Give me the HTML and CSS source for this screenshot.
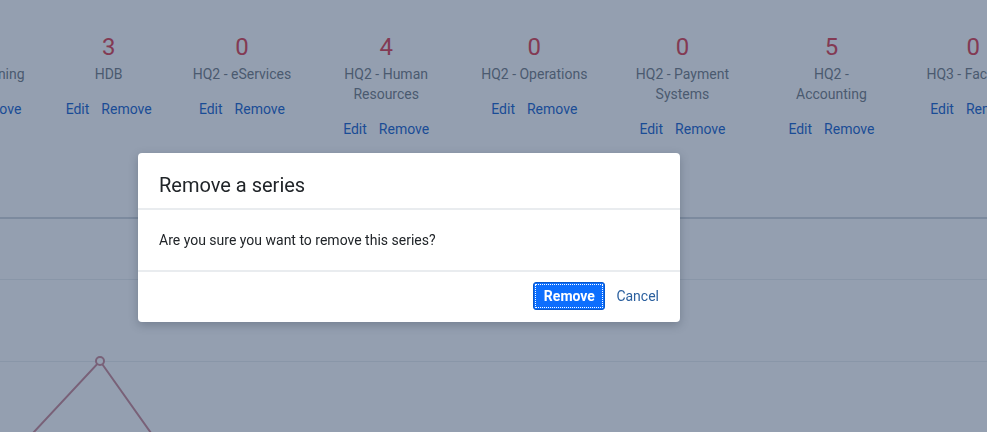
FILE: index.html
```html
<!DOCTYPE html>
<html>
<head lang="en">
    <meta charset="UTF-8">
    <title>Series</title>
    <link rel="stylesheet" href="styles.css">
</head>
<body>
<div class="page">
    <div class="series-list">
        <div class="series">
            <div class="count">2</div>
            <div class="name">HQ1 - Planning</div>
            <div class="actions"><a href="#">Edit</a><a href="#">Remove</a></div>
        </div>
        <div class="series">
            <div class="count">3</div>
            <div class="name">HDB</div>
            <div class="actions"><a href="#">Edit</a><a href="#">Remove</a></div>
        </div>
        <div class="series">
            <div class="count">0</div>
            <div class="name">HQ2 - eServices</div>
            <div class="actions"><a href="#">Edit</a><a href="#">Remove</a></div>
        </div>
        <div class="series">
            <div class="count">4</div>
            <div class="name">HQ2 - Human Resources</div>
            <div class="actions"><a href="#">Edit</a><a href="#">Remove</a></div>
        </div>
        <div class="series">
            <div class="count">0</div>
            <div class="name">HQ2 - Operations</div>
            <div class="actions"><a href="#">Edit</a><a href="#">Remove</a></div>
        </div>
        <div class="series">
            <div class="count">0</div>
            <div class="name">HQ2 - Payment Systems</div>
            <div class="actions"><a href="#">Edit</a><a href="#">Remove</a></div>
        </div>
        <div class="series">
            <div class="count">5</div>
            <div class="name">HQ2 - Accounting</div>
            <div class="actions"><a href="#">Edit</a><a href="#">Remove</a></div>
        </div>
        <div class="series">
            <div class="count">0</div>
            <div class="name">HQ3 - Facilities</div>
            <div class="actions"><a href="#">Edit</a><a href="#">Remove</a></div>
        </div>
    </div>

    <svg class="chart" width="987" height="215" viewBox="0 0 987 215">
        <line x1="0" y1="1" x2="987" y2="1" class="axis"/>
        <line x1="0" y1="62.5" x2="987" y2="62.5" class="grid"/>
        <line x1="0" y1="144.5" x2="987" y2="144.5" class="grid"/>
        <polyline points="33,216 100,144 151,216" class="trend"/>
        <circle cx="100" cy="144" r="4" class="dot"/>
    </svg>
</div>

<div class="backdrop"></div>

<div class="modal-layer">
    <div class="modal">
        <div class="modal-header">
            <h5>Remove a series</h5>
        </div>
        <div class="modal-body">
            <p>Are you sure you want to remove this series?</p>
        </div>
        <div class="modal-footer">
            <button class="btn-primary">Remove</button>
            <a href="#" class="btn-link">Cancel</a>
        </div>
    </div>
</div>
</body>
</html>
```

FILE: styles.css
```css
*{
    margin: 0px;
    padding: 0px;
    box-sizing: border-box;
}
body{
    font-family: Roboto, "Noto Sans", sans-serif;
    background: #fff;
    color: #212529;
    overflow: hidden;
}
a{
    color: #0a58ca;
    text-decoration: none;
}
.page{
    width: 987px;
    height: 432px;
    overflow: hidden;
}
.series-list{
    display: flex;
    align-items: flex-start;
    gap: 41px;
    margin-left: -68px;
    padding-top: 32px;
    height: 217px;
}
.series{
    flex: none;
    text-align: center;
}
.count{
    font-size: 24px;
    line-height: 30px;
    color: #dc3545;
}
.name{
    max-width: 108px;
    margin: 2px auto 0px auto;
    font-size: 14px;
    line-height: 20px;
    color: #6c757d;
}
.actions{
    margin-top: 15px;
    font-size: 14px;
    line-height: 20px;
    display: flex;
    justify-content: center;
    gap: 12px;
}
.chart{
    display: block;
}
.chart .axis{
    stroke: #ced4da;
    stroke-width: 2;
}
.chart .grid{
    stroke: #e9ecef;
    stroke-width: 1;
}
.chart .trend{
    fill: none;
    stroke: #c8838f;
    stroke-width: 2;
}
.chart .dot{
    fill: #fff;
    stroke: #c8838f;
    stroke-width: 2;
}
.backdrop{
    position: fixed;
    top: 0px;
    left: 0px;
    right: 0px;
    bottom: 0px;
    background: rgba(42, 63, 97, 0.5);
}
.modal-layer{
    position: fixed;
    top: 0px;
    left: 0px;
    right: 0px;
    bottom: 0px;
    padding: 153px 0px 0px 138px;
}
.modal{
    width: 542px;
    background: #fff;
    border-radius: 4px;
    box-shadow: 0px 3px 10px rgba(20, 30, 50, 0.25);
}
.modal-header{
    height: 57px;
    padding: 0px 21px;
    display: flex;
    align-items: center;
    border-bottom: 2px solid #e9ecef;
}
.modal-header h5{
    font-size: 20px;
    font-weight: 400;
    color: #212529;
    padding-top: 8px;
}
.modal-body{
    height: 62px;
    padding: 0px 21px;
    display: flex;
    align-items: center;
    border-bottom: 2px solid #e9ecef;
    font-size: 14px;
}
.modal-footer{
    height: 50px;
    padding: 0px 21px 2px 0px;
    display: flex;
    align-items: center;
    justify-content: flex-end;
    gap: 11px;
}
.btn-primary{
    width: 72px;
    height: 28px;
    font-family: inherit;
    font-size: 14px;
    font-weight: 700;
    color: #fff;
    background: #0d6efd;
    border: 1px solid #0a58ca;
    border-radius: 3px;
    outline: 1px dotted #fff;
    outline-offset: -3px;
}
.btn-link{
    font-size: 14px;
    color: #2a5f9e;
}
```
